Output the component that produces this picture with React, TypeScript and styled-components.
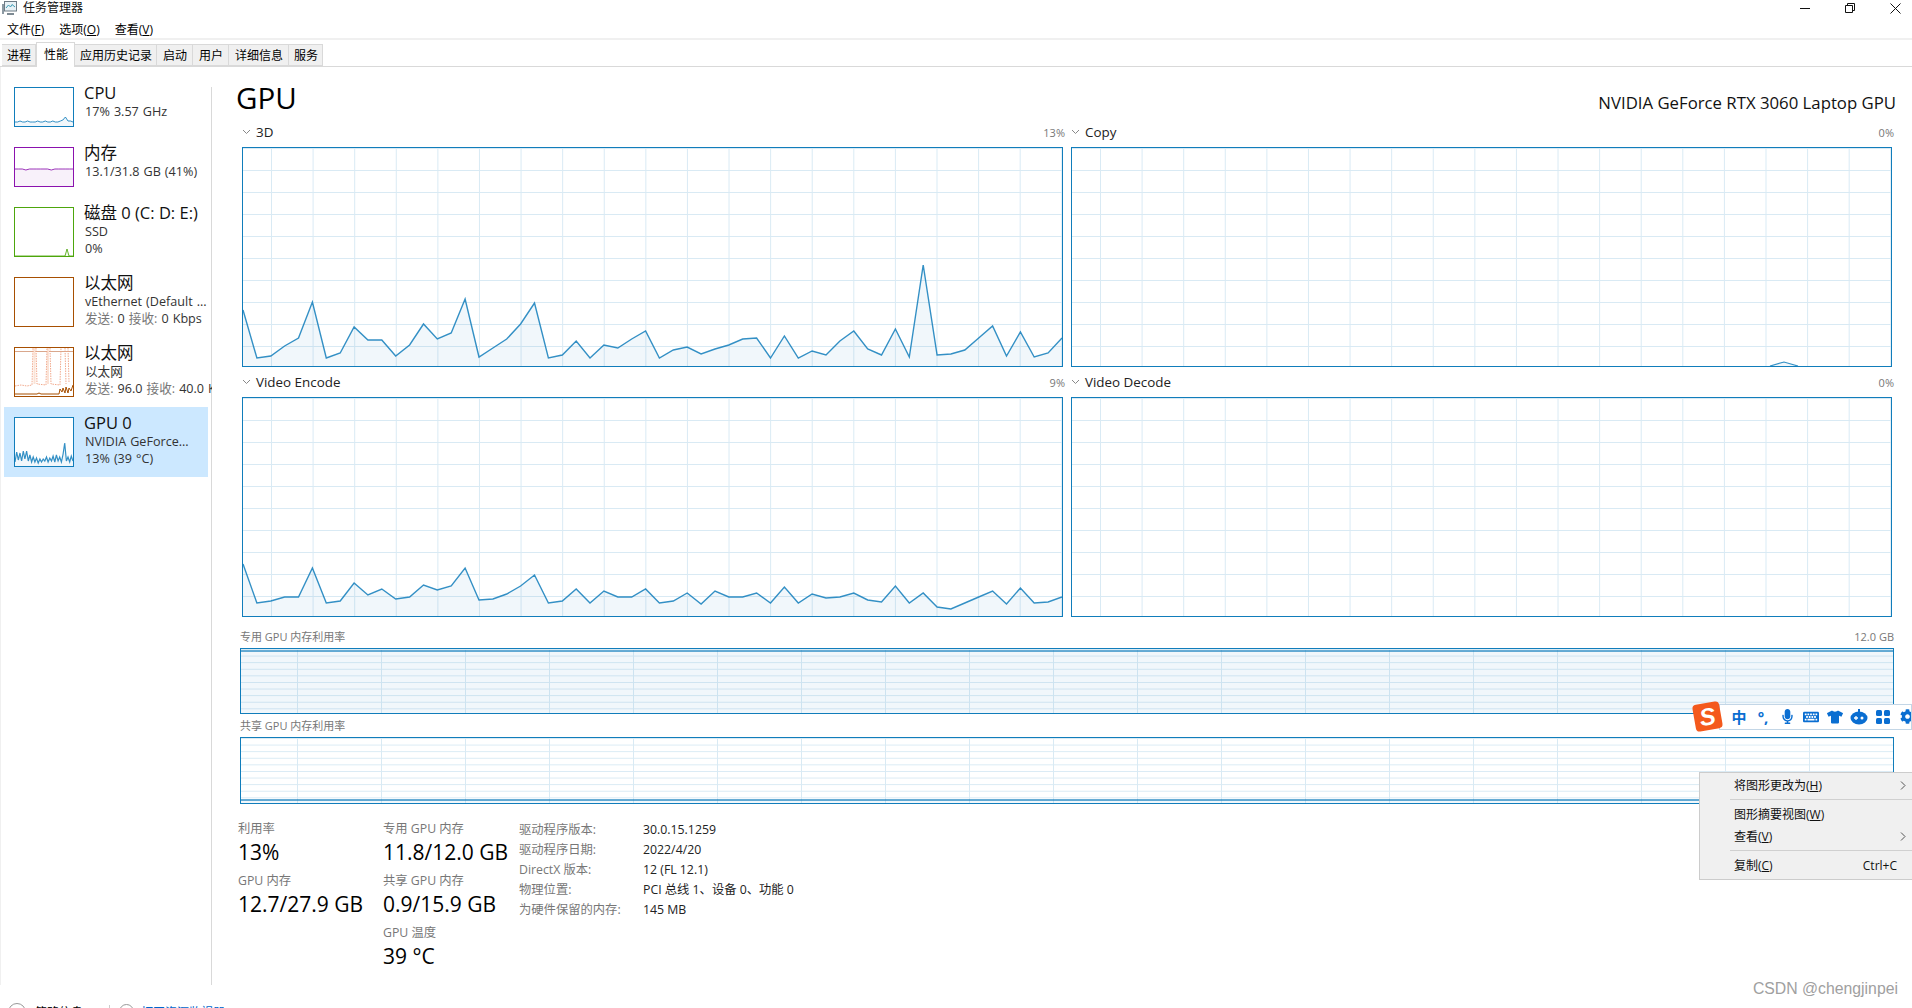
import React from "react";
import styled, { createGlobalStyle } from "styled-components";
import { FaMicrophone, FaKeyboard, FaTshirt, FaCog } from "react-icons/fa";

const UI_FONT = `"Open Sans", "Noto Sans CJK SC", sans-serif`;

const GlobalStyle = createGlobalStyle`
  html, body {
    margin: 0;
    padding: 0;
    background: #fff;
  }
  * {
    box-sizing: border-box;
  }
`;

const Page = styled.div`
  position: relative;
  width: 1912px;
  height: 1008px;
  overflow: hidden;
  display: flex;
  flex-direction: column;
  background: #fff;
  color: #000;
  font-family: ${UI_FONT};
  font-size: 12px;
`;

const TitleBar = styled.div`
  height: 16px;
  flex: none;
  display: flex;
  align-items: center;
  padding-left: 2px;
  gap: 6px;
  line-height: 16px;
`;

const TitleText = styled.span`
  flex: 1;
  color: #111;
`;

const WindowButtons = styled.div`
  display: flex;
  gap: 35px;
  padding-right: 11px;
  align-items: center;
`;

const MenuBar = styled.div`
  height: 24px;
  flex: none;
  display: flex;
  align-items: center;
  gap: 15px;
  padding: 3px 0 0 7px;
  border-bottom: 2px solid #f0f0f0;
`;

const MenuLabel = styled.span`
  u {
    text-underline-offset: 1px;
  }
`;

const TabStrip = styled.div`
  height: 27px;
  flex: none;
  display: flex;
  align-items: flex-end;
  padding-left: 2px;
  border-bottom: 1px solid #d9d9d9;
`;

const Tab = styled.div<{ $active?: boolean; $w: number }>`
  width: ${(p) => p.$w}px;
  height: ${(p) => (p.$active ? 25 : 22)}px;
  margin-bottom: ${(p) => (p.$active ? -1 : 0)}px;
  display: flex;
  align-items: center;
  justify-content: center;
  background: ${(p) => (p.$active ? "#fff" : "#f0f0f0")};
  border: 1px solid #d9d9d9;
  border-left-width: ${(p) => (p.$active ? 1 : 0)}px;
  border-bottom: ${(p) => (p.$active ? "none" : "1px solid #d9d9d9")};
  padding: 0 0 ${(p) => (p.$active ? 3 : 0)}px 1px;
`;

const Body = styled.div`
  height: 918px;
  flex: none;
  display: flex;
`;

const Sidebar = styled.div`
  width: 212px;
  flex: none;
  padding: 10px 0 0 3px;
  overflow: hidden;
  border-left: 1px solid #f0f0f0;
  background: linear-gradient(#d9d9d9, #d9d9d9) right 20px / 1px calc(100% - 20px) no-repeat;
`;

const SideItem = styled.div<{ $selected?: boolean }>`
  width: 204px;
  display: flex;
  background: ${(p) => (p.$selected ? "#cce8ff" : "transparent")};
`;

const Thumb = styled.div<{ $color: string; $h: number }>`
  width: 60px;
  height: ${(p) => p.$h}px;
  flex: none;
  margin: 10px;
  border: 1px solid ${(p) => p.$color};
  background: #fff;

  svg {
    display: block;
    width: 100%;
    height: 100%;
  }
`;

const SideText = styled.div`
  padding-top: 6px;
  white-space: nowrap;
`;

const SideTitle = styled.div`
  font-size: 16.5px;
  line-height: 20px;
  color: #111;
`;

const SideLine = styled.div`
  font-size: 12.6px;
  line-height: 17px;
  padding-left: 1px;
  word-spacing: 0.8px;
  color: #333;

  span {
    color: #777;
  }
`;

const Content = styled.div`
  flex: 1;
  min-width: 0;
  padding: 0 18px 0 24px;
`;

const Header = styled.div`
  height: 50px;
  display: flex;
  justify-content: space-between;
  align-items: flex-start;
`;

const GpuTitle = styled.div`
  font-size: 29.5px;
  line-height: 40px;
  margin-top: 11px;
  color: #000;
`;

const GpuModel = styled.div`
  font-size: 16.75px;
  line-height: 22px;
  margin: 25px -2px 0 0;
  color: #111;
`;

const GraphGrid = styled.div`
  display: grid;
  grid-template-columns: 821px 821px;
  column-gap: 8px;
  margin-left: 6px;
`;

const GraphCell = styled.div`
  display: flex;
  flex-direction: column;
`;

const GraphLabel = styled.div`
  height: 30px;
  display: flex;
  align-items: center;
  justify-content: space-between;
  margin-right: -2px;
  font-size: 13.4px;
  color: #222;
`;

const LabelLeft = styled.div`
  display: flex;
  align-items: center;
  gap: 5px;
`;

const Percent = styled.span`
  font-size: 11px;
  color: #777;
`;

const Plot = styled.div<{ $h: number; $sx: number; $sy: number; $ox: number }>`
  height: ${(p) => p.$h}px;
  border: 1px solid #117dbb;
  background-color: #fff;
  background-image: linear-gradient(to right, #d9eaf4 1px, transparent 1px),
    linear-gradient(to bottom, #d9eaf4 1px, transparent 1px);
  background-size: ${(p) => p.$sx}px 100%, 100% ${(p) => p.$sy}px;
  background-position: ${(p) => p.$ox}px 0, 0 0;

  svg {
    display: block;
    width: 100%;
    height: 100%;
  }
`;

const MemorySection = styled.div`
  margin-left: 4px;
`;

const MemoryLabel = styled.div<{ $top: number }>`
  height: 18px;
  margin: ${(p) => p.$top}px 0 3px;
  display: flex;
  align-items: center;
  justify-content: space-between;
  font-size: 11px;
  color: #777;
`;

const Stats = styled.div`
  display: flex;
  margin: 16px 0 0 2px;
`;

const StatColumn = styled.div<{ $w: number }>`
  width: ${(p) => p.$w}px;
  flex: none;
`;

const Stat = styled.div`
  height: 52px;
`;

const StatLabel = styled.div`
  font-size: 12.3px;
  line-height: 18px;
  color: #777;
`;

const StatValue = styled.div`
  font-size: 21px;
  line-height: 28px;
  color: #000;
  white-space: nowrap;
`;

const Details = styled.div`
  display: grid;
  grid-template-columns: 124px auto;
  grid-auto-rows: 20px;
  align-items: center;
  font-size: 12.3px;
  line-height: 20px;
`;

const DetailKey = styled.span`
  color: #777;
`;

const DetailVal = styled.span`
  color: #222;
`;

const Footer = styled.div`
  flex: 1;
  min-height: 0;
  display: flex;
  align-items: flex-start;
  padding: 18px 0 0 8px;
  font-size: 12px;
  line-height: 20px;
  white-space: nowrap;
`;

const FooterCircle = styled.div`
  width: 18px;
  height: 18px;
  flex: none;
  border-radius: 50%;
  border: 1px solid #999;
  margin-right: 9px;
`;

const FooterSep = styled.div`
  width: 1px;
  height: 20px;
  flex: none;
  background: #ccc;
  margin: 2px 9px 0 26px;
`;

const FooterMonitor = styled(FooterCircle)`
  width: 15px;
  height: 15px;
  margin: 1px 7px 0 0;
`;

const FooterLink = styled.span`
  color: #0066cc;
`;

const ImeBar = styled.div`
  position: absolute;
  left: 1694px;
  top: 703px;
  width: 218px;
  display: flex;
  align-items: center;
`;

const ImeLogo = styled.div`
  width: 27px;
  height: 27px;
  flex: none;
  margin-right: -2px;
  z-index: 1;
  border-radius: 4px;
  background: #f4591c;
  color: #fff;
  font-family: "Liberation Sans", sans-serif;
  font-weight: 700;
  font-style: italic;
  font-size: 24px;
  line-height: 27px;
  text-align: center;
  transform: rotate(-10deg);
`;

const ImeStrip = styled.div`
  height: 26px;
  flex: 1;
  min-width: 0;
  overflow: hidden;
  display: flex;
  align-items: center;
  padding-left: 7px;
  background: #fff;
  border: 1px solid #c3d6e6;
  color: #0a6ed1;
`;

const ImeSlot = styled.div`
  width: 24px;
  flex: none;
  display: flex;
  justify-content: center;
  align-items: center;
  font-size: 15px;
  font-weight: 700;
  line-height: 24px;
`;

const ContextMenu = styled.div`
  position: absolute;
  left: 1699px;
  top: 772px;
  width: 213px;
  height: 108px;
  padding-top: 1px;
  background: #f0f0f0;
  border: 1px solid #ccc;
  border-right: none;
  font-size: 12px;
`;

const MenuItem = styled.div`
  height: 22px;
  display: flex;
  align-items: center;
  justify-content: space-between;
  padding: 0 6px 0 34px;
  color: #111;
`;

const MenuDivider = styled.div`
  height: 1px;
  margin: 3px 0 3px 30px;
  background: #d0d0d0;
`;

const Shortcut = styled.span`
  margin-right: 9px;
`;

const Watermark = styled.div`
  position: absolute;
  right: 14px;
  top: 979px;
  font-family: "Liberation Sans", sans-serif;
  font-size: 15.8px;
  line-height: 20px;
  color: #a0a0a0;
`;

const gridProps = { $sx: 41.6, $sy: 22 };

const data3d = [
  56, 8, 10, 20, 28, 64, 8, 13, 39, 26, 26, 10, 21, 42, 27, 33, 67, 9, 18, 27, 42, 63, 8, 11, 25, 8, 21, 18, 27, 35,
  8, 16, 19, 12, 17, 21, 27, 28, 8, 30, 8, 15, 11, 25, 35, 17, 11, 37, 9, 101, 11, 12, 16, 28, 40, 10, 34, 9, 13, 28,
];

const dataEncode = [
  52, 13, 15, 19, 19, 48, 13, 15, 33, 21, 27, 17, 19, 31, 26, 30, 48, 16, 17, 22, 30, 41, 13, 15, 27, 13, 25, 19, 19, 27, 13,
  15, 23, 12, 25, 19, 19, 23, 13, 29, 13, 22, 18, 19, 23, 16, 14, 30, 13, 23, 9, 7, 13, 19, 25, 12, 28, 13, 14, 19,
];

const cpuSpark = [4, 4, 5, 4, 4, 5, 4, 4, 4, 5, 4, 4, 5, 4, 4, 5, 4, 4, 5, 6, 9, 5, 5, 4];
const gpuSpark = [
  4, 14, 6, 13, 5, 15, 7, 15, 5, 11, 4, 9, 4, 8, 3, 7, 4, 7, 5, 9, 4, 8, 5, 10, 4, 11, 5, 9, 4, 12, 23, 5, 9, 4, 10, 5,
];
const diskSpark = [0, 0, 0, 0, 0, 0, 0, 0, 0, 0, 0, 0, 0, 0, 0, 0, 0, 0, 0, 0, 0, 0, 0, 0, 0, 0, 7, 0, 0, 0];
const memSpark = [17, 17, 17, 16, 17, 17, 17, 17, 17, 17, 16, 17, 17, 17, 17, 17, 17];

// line plus translucent area, drawn over the plot's grid
const Trace: React.FC<{ values: number[]; w: number; h: number; color?: string; stroke?: number }> = ({
  values,
  w,
  h,
  color = "#117dbb",
  stroke = 1.4,
}) => {
  const step = w / (values.length - 1);
  const pts = values.map((v, i) => `${(i * step).toFixed(1)},${h - v}`).join(" ");
  return (
    <svg viewBox={`0 0 ${w} ${h}`} preserveAspectRatio="none">
      <polygon points={`0,${h} ${pts} ${w},${h}`} fill={color} fillOpacity={0.06} />
      <polyline points={pts} fill="none" stroke={color} strokeWidth={stroke} opacity={0.85} />
    </svg>
  );
};

const Chevron = () => (
  <svg width="9" height="6" viewBox="0 0 9 6">
    <path d="M1 1l3.5 3.5L8 1" fill="none" stroke="#888" strokeWidth="1" />
  </svg>
);

const AppIcon = () => (
  <svg width="15" height="14" viewBox="0 0 15 14">
    <rect x="2.5" y="0.5" width="12" height="9.5" fill="#e8f1f6" stroke="#6d7a84" />
    <path d="M4 7l2.5-3 2 2 1.5-2.5 3 2.5" fill="none" stroke="#3c9bb3" strokeWidth="1" />
    <rect x="0" y="3" width="2" height="10" fill="#8d9aa3" />
    <path d="M5 13h7" stroke="#7d8a93" strokeWidth="2" />
  </svg>
);

const WinMin = () => (
  <svg width="10" height="10" viewBox="0 0 10 10">
    <path d="M0 5.5h10" stroke="#111" strokeWidth="1" />
  </svg>
);

const WinRestore = () => (
  <svg width="10" height="10" viewBox="0 0 10 10">
    <path d="M.5 2.5h7v7h-7zM2.5 2.5v-2h7v7h-2" fill="none" stroke="#111" strokeWidth="1" />
  </svg>
);

const WinClose = () => (
  <svg width="11" height="11" viewBox="0 0 11 11">
    <path d="M.5.5l10 10M10.5.5l-10 10" stroke="#111" strokeWidth="1" />
  </svg>
);

const MenuArrow = () => (
  <svg width="6" height="9" viewBox="0 0 6 9">
    <path d="M1 .5l4 4-4 4" fill="none" stroke="#555" strokeWidth="1" />
  </svg>
);

const ImeRobot = () => (
  <svg width="18" height="16" viewBox="0 0 18 16">
    <ellipse cx="9" cy="9" rx="8.5" ry="6.5" fill="currentColor" />
    <rect x="8" y="0" width="2" height="3" fill="currentColor" />
    <circle cx="12" cy="9" r="1.5" fill="#fff" />
    <path d="M4 9h4M6 7v4" stroke="#fff" strokeWidth="1.3" />
  </svg>
);

const ImeGrid = () => (
  <svg width="14" height="14" viewBox="0 0 14 14" fill="currentColor">
    <rect x="0" y="0" width="6" height="6" rx="1.5" />
    <rect x="8" y="0" width="6" height="6" rx="1.5" />
    <rect x="0" y="8" width="6" height="6" rx="1.5" />
    <rect x="8" y="8" width="6" height="6" rx="1.5" />
  </svg>
);

const EthernetSpark = () => (
  <svg viewBox="0 0 58 48" preserveAspectRatio="none">
    <path d="M0 3.5h58" stroke="#d9a78c" strokeWidth="1" />
    <path d="M19.5 0v36M33 0v36" stroke="#fbe3d6" strokeWidth="2" />
    <path
      d="M0 38l6-1 6 1 5-1 1-37M21 0l1 36 9 1 1-37M35 0l1 36 9 1 1-37M50 0l1 36M53 0l1 34"
      fill="none"
      stroke="#ef9f80"
      strokeWidth="0.9"
      strokeDasharray="1.5 1"
    />
    <path
      d="M0 46h22l2-1 2 1h18l1-5 2 3 1-4 2 5 1-6 2 6 1-5 2 3 2-6"
      fill="none"
      stroke="#a74f01"
      strokeWidth="1"
    />
  </svg>
);

const tabs = [
  { label: "进程", w: 34 },
  { label: "性能", w: 39, active: true },
  { label: "应用历史记录", w: 82 },
  { label: "启动", w: 36 },
  { label: "用户", w: 36 },
  { label: "详细信息", w: 60 },
  { label: "服务", w: 34 },
];

const App: React.FC = () => {
  return (
    <Page>
      <GlobalStyle />
      <TitleBar>
        <AppIcon />
        <TitleText>任务管理器</TitleText>
        <WindowButtons>
          <WinMin />
          <WinRestore />
          <WinClose />
        </WindowButtons>
      </TitleBar>

      <MenuBar>
        <MenuLabel>
          文件(<u>F</u>)
        </MenuLabel>
        <MenuLabel>
          选项(<u>O</u>)
        </MenuLabel>
        <MenuLabel>
          查看(<u>V</u>)
        </MenuLabel>
      </MenuBar>

      <TabStrip>
        {tabs.map((t) => (
          <Tab key={t.label} $w={t.w} $active={t.active}>
            {t.label}
          </Tab>
        ))}
      </TabStrip>

      <Body>
        <Sidebar>
          <SideItem>
            <Thumb $color="#117dbb" $h={40}>
              <Trace values={cpuSpark} w={58} h={38} stroke={1} />
            </Thumb>
            <SideText>
              <SideTitle>CPU</SideTitle>
              <SideLine>17% 3.57 GHz</SideLine>
            </SideText>
          </SideItem>
          <SideItem>
            <Thumb $color="#8b12ae" $h={40}>
              <Trace values={memSpark} w={58} h={38} color="#8b12ae" stroke={1} />
            </Thumb>
            <SideText>
              <SideTitle>内存</SideTitle>
              <SideLine>13.1/31.8 GB (41%)</SideLine>
            </SideText>
          </SideItem>
          <SideItem>
            <Thumb $color="#4da60c" $h={50}>
              <Trace values={diskSpark} w={58} h={48} color="#4da60c" stroke={1} />
            </Thumb>
            <SideText>
              <SideTitle>磁盘 0 (C: D: E:)</SideTitle>
              <SideLine>SSD</SideLine>
              <SideLine>0%</SideLine>
            </SideText>
          </SideItem>
          <SideItem>
            <Thumb $color="#a74f01" $h={50} />
            <SideText>
              <SideTitle>以太网</SideTitle>
              <SideLine>vEthernet (Default ...</SideLine>
              <SideLine>
                <span>发送:</span> 0 <span>接收:</span> 0 Kbps
              </SideLine>
            </SideText>
          </SideItem>
          <SideItem>
            <Thumb $color="#a74f01" $h={50}>
              <EthernetSpark />
            </Thumb>
            <SideText>
              <SideTitle>以太网</SideTitle>
              <SideLine>以太网</SideLine>
              <SideLine>
                <span>发送:</span> 96.0 <span>接收:</span> 40.0 Kbps
              </SideLine>
            </SideText>
          </SideItem>
          <SideItem $selected>
            <Thumb $color="#117dbb" $h={50}>
              <Trace values={gpuSpark} w={58} h={48} stroke={1.2} />
            </Thumb>
            <SideText>
              <SideTitle>GPU 0</SideTitle>
              <SideLine>NVIDIA GeForce...</SideLine>
              <SideLine>13% (39 °C)</SideLine>
            </SideText>
          </SideItem>
        </Sidebar>

        <Content>
          <Header>
            <GpuTitle>GPU</GpuTitle>
            <GpuModel>NVIDIA GeForce RTX 3060 Laptop GPU</GpuModel>
          </Header>

          <GraphGrid>
            <GraphCell>
              <GraphLabel>
                <LabelLeft>
                  <Chevron />
                  3D
                </LabelLeft>
                <Percent>13%</Percent>
              </GraphLabel>
              <Plot $h={220} {...gridProps} $ox={28}>
                <Trace values={data3d} w={819} h={218} />
              </Plot>
            </GraphCell>
            <GraphCell>
              <GraphLabel>
                <LabelLeft>
                  <Chevron />
                  Copy
                </LabelLeft>
                <Percent>0%</Percent>
              </GraphLabel>
              <Plot $h={220} {...gridProps} $ox={28}>
                <svg viewBox="0 0 819 218" preserveAspectRatio="none">
                  <path d="M698 218l14-4 14 4z" fill="#117dbb" fillOpacity={0.06} />
                  <polyline points="698,218 712,214 726,218" fill="none" stroke="#117dbb" strokeWidth={1.2} opacity={0.85} />
                </svg>
              </Plot>
            </GraphCell>
            <GraphCell>
              <GraphLabel>
                <LabelLeft>
                  <Chevron />
                  Video Encode
                </LabelLeft>
                <Percent>9%</Percent>
              </GraphLabel>
              <Plot $h={220} {...gridProps} $ox={28}>
                <Trace values={dataEncode} w={819} h={218} />
              </Plot>
            </GraphCell>
            <GraphCell>
              <GraphLabel>
                <LabelLeft>
                  <Chevron />
                  Video Decode
                </LabelLeft>
                <Percent>0%</Percent>
              </GraphLabel>
              <Plot $h={220} {...gridProps} $ox={28} />
            </GraphCell>
          </GraphGrid>

          <MemorySection>
            <MemoryLabel $top={10}>
              <span>专用 GPU 内存利用率</span>
              <span>12.0 GB</span>
            </MemoryLabel>
            <Plot $h={66} $sx={84} $sy={6.6} $ox={56}>
              <Trace values={[62, 62]} w={1652} h={64} stroke={1.4} />
            </Plot>
            <MemoryLabel $top={2}>
              <span>共享 GPU 内存利用率</span>
            </MemoryLabel>
            <Plot $h={67} $sx={84} $sy={6.6} $ox={56}>
              <Trace values={[3, 3]} w={1652} h={65} stroke={1.4} />
            </Plot>
          </MemorySection>

          <Stats>
            <StatColumn $w={145}>
              <Stat>
                <StatLabel>利用率</StatLabel>
                <StatValue>13%</StatValue>
              </Stat>
              <Stat>
                <StatLabel>GPU 内存</StatLabel>
                <StatValue>12.7/27.9 GB</StatValue>
              </Stat>
            </StatColumn>
            <StatColumn $w={136}>
              <Stat>
                <StatLabel>专用 GPU 内存</StatLabel>
                <StatValue>11.8/12.0 GB</StatValue>
              </Stat>
              <Stat>
                <StatLabel>共享 GPU 内存</StatLabel>
                <StatValue>0.9/15.9 GB</StatValue>
              </Stat>
              <Stat>
                <StatLabel>GPU 温度</StatLabel>
                <StatValue>39 °C</StatValue>
              </Stat>
            </StatColumn>
            <Details>
              <DetailKey>驱动程序版本:</DetailKey>
              <DetailVal>30.0.15.1259</DetailVal>
              <DetailKey>驱动程序日期:</DetailKey>
              <DetailVal>2022/4/20</DetailVal>
              <DetailKey>DirectX 版本:</DetailKey>
              <DetailVal>12 (FL 12.1)</DetailVal>
              <DetailKey>物理位置:</DetailKey>
              <DetailVal>PCI 总线 1、设备 0、功能 0</DetailVal>
              <DetailKey>为硬件保留的内存:</DetailKey>
              <DetailVal>145 MB</DetailVal>
            </Details>
          </Stats>
        </Content>
      </Body>

      <Footer>
        <FooterCircle />
        <span>简略信息</span>
        <FooterSep />
        <FooterMonitor />
        <FooterLink>打开资源监视器</FooterLink>
      </Footer>

      <ImeBar>
        <ImeLogo>S</ImeLogo>
        <ImeStrip>
          <ImeSlot>中</ImeSlot>
          <ImeSlot>°,</ImeSlot>
          <ImeSlot>
            <FaMicrophone size={15} />
          </ImeSlot>
          <ImeSlot>
            <FaKeyboard size={16} />
          </ImeSlot>
          <ImeSlot>
            <FaTshirt size={16} />
          </ImeSlot>
          <ImeSlot>
            <ImeRobot />
          </ImeSlot>
          <ImeSlot>
            <ImeGrid />
          </ImeSlot>
          <ImeSlot>
            <FaCog size={15} />
          </ImeSlot>
        </ImeStrip>
      </ImeBar>

      <ContextMenu>
        <MenuItem>
          <span>
            将图形更改为(<u>H</u>)
          </span>
          <MenuArrow />
        </MenuItem>
        <MenuDivider />
        <MenuItem>
          <span>
            图形摘要视图(<u>W</u>)
          </span>
        </MenuItem>
        <MenuItem>
          <span>
            查看(<u>V</u>)
          </span>
          <MenuArrow />
        </MenuItem>
        <MenuDivider />
        <MenuItem>
          <span>
            复制(<u>C</u>)
          </span>
          <Shortcut>Ctrl+C</Shortcut>
        </MenuItem>
      </ContextMenu>

      <Watermark>CSDN @chengjinpei</Watermark>
    </Page>
  );
};

export default App;
